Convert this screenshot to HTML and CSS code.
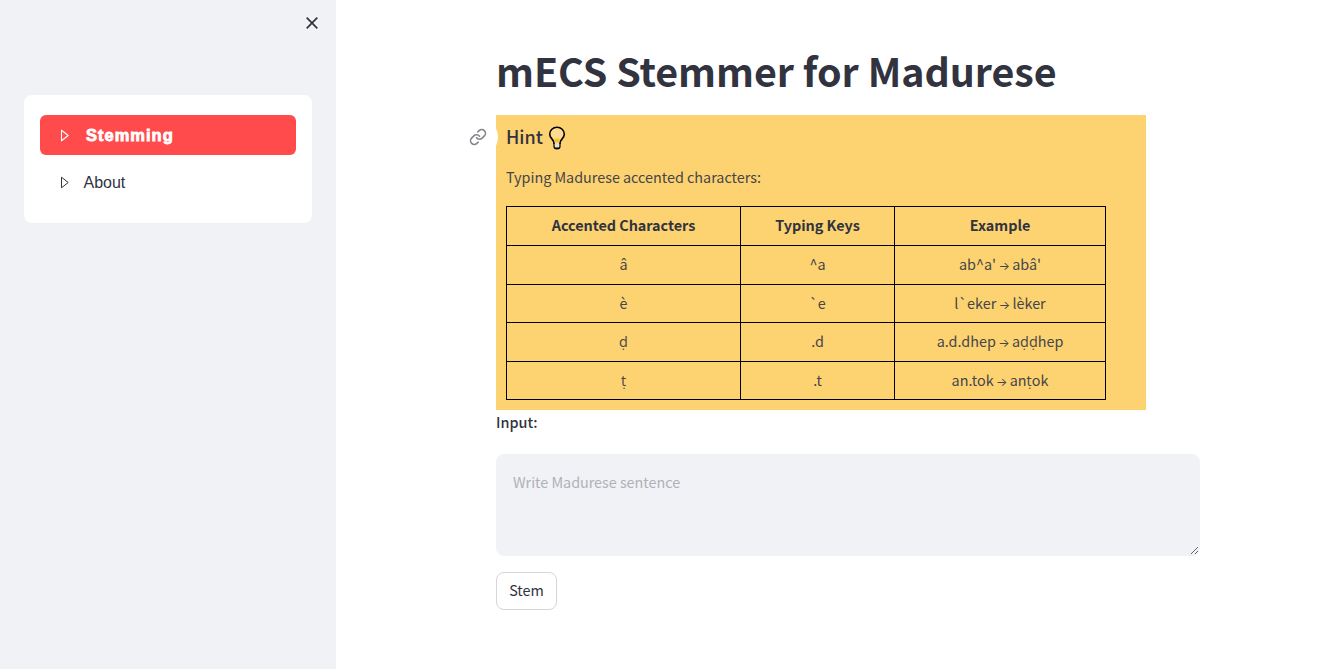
FILE: index.html
```html
<!DOCTYPE html>
<html lang="en">
<head>
<meta charset="utf-8">
<title>mECS Stemmer for Madurese</title>
<link rel="stylesheet" href="styles.css">
</head>
<body>
<div class="app">
  <aside class="sidebar">
    <button class="close" aria-label="Close sidebar">
      <svg width="14" height="14" viewBox="0 0 14 14"><path d="M1.7 1.7l10.6 10.6M12.3 1.7L1.7 12.3" fill="none" stroke="#31333f" stroke-width="1.7"/></svg>
    </button>
    <nav class="menu">
      <a class="item active"><svg class="caret" width="9" height="13" viewBox="0 0 9 13"><path d="M1.5 1.2v10.6L8.2 6.5z" fill="none" stroke="currentColor" stroke-width="1.1" stroke-linejoin="round"/></svg><span class="item-text">Stemming</span></a>
      <a class="item"><svg class="caret" width="9" height="13" viewBox="0 0 9 13"><path d="M1.5 1.2v10.6L8.2 6.5z" fill="none" stroke="currentColor" stroke-width="1" stroke-linejoin="round"/></svg><span class="item-text">About</span></a>
    </nav>
  </aside>
  <main class="main">
    <h1 class="title">mECS Stemmer for Madurese</h1>
    <section class="hint">
      <span class="anchor"><svg width="18" height="18" viewBox="0 0 24 24" fill="none" stroke="#85868c" stroke-width="2.1" stroke-linecap="round" stroke-linejoin="round"><path d="M10 13a5 5 0 0 0 7.54.54l3-3a5 5 0 0 0-7.07-7.07l-1.72 1.71"/><path d="M14 11a5 5 0 0 0-7.54-.54l-3 3a5 5 0 0 0 7.07 7.07l1.71-1.71"/></svg></span>
      <h3 class="hint-title"><span class="hint-word">Hint</span>
        <svg class="bulb" width="18" height="24" viewBox="0 0 18 24"><path d="M6 17.3C6 13.4 1.7 12.3 1.7 8.2a7.3 7 0 0 1 14.6 0c0 4.1-4.3 5.2-4.3 9.1z" fill="#fddc90" stroke="#000" stroke-width="1.6"/><path d="M6.3 12l1.5 1.2L9 12l1.2 1.2 1.5-1.2-.6 5.2H6.9z" fill="#fcc21b"/><path d="M6.6 16.6h4.8v4.4H6.6z" fill="#dcdfe8"/><path d="M6 17v3.4Q6 22.8 9 22.8t3-2.4V17" fill="none" stroke="#000" stroke-width="1.2"/><path d="M7 21.4h4l-.8 1.4H7.8z" fill="#000"/></svg>
      </h3>
      <p class="hint-copy">Typing Madurese accented characters:</p>
      <table class="keys">
        <thead><tr><th class="c1">Accented Characters</th><th class="c2">Typing Keys</th><th class="c3">Example</th></tr></thead>
        <tbody>
          <tr><td>â</td><td>^a</td><td>ab^a' <span class="arrow">→</span> abâ'</td></tr>
          <tr class="short"><td>è</td><td>`e</td><td>l`eker <span class="arrow">→</span> lèker</td></tr>
          <tr><td>ḍ</td><td>.d</td><td>a.d.dhep <span class="arrow">→</span> aḍḍhep</td></tr>
          <tr class="short"><td>ṭ</td><td>.t</td><td>an.tok <span class="arrow">→</span> anṭok</td></tr>
        </tbody>
      </table>
    </section>
    <label class="label" for="sentence">Input:</label>
    <div class="field">
      <textarea class="area" id="sentence" placeholder="Write Madurese sentence"></textarea>
    </div>
    <button class="stem">Stem</button>
  </main>
</div>
</body>
</html>
```
FILE: styles.css
```css
* { box-sizing: border-box; }
body {
  margin: 0;
  color: #31333f;
  background: #fff;
  font-family: "Noto Sans CJK SC", "Open Sans", sans-serif;
  font-size: 14.4px;
  font-weight: 400;
}
.app { display: flex; height: 669px; overflow: hidden; }
.sidebar { width: 336px; flex: none; background: #f0f2f6; padding: 16px 24px; }
.close {
  display: block;
  margin: 0 -7px 65px auto;
  width: 14px;
  height: 14px;
  padding: 0;
  border: 0;
  background: none;
}
.close svg { display: block; }
.menu { height: 128px; padding: 20px 16px; background: #fff; border-radius: 8px; }
.item {
  display: flex;
  align-items: center;
  height: 40px;
  margin-bottom: 7px;
  padding-left: 20px;
  border-radius: 6px;
  font: 400 16px "Liberation Sans", sans-serif;
}
.item .item-text { margin-left: 14.5px; padding-top: 2px; }
.active { background: #ff4b4b; color: #fff; font-weight: 700; }
.active .item-text { margin-left: 17px; padding-top: 0; font-size: 16.5px; letter-spacing: 1px; -webkit-text-stroke: 0.8px #fff; }
.main { padding: 42px 0 0 160px; width: 864px; }
.title {
  margin: 0 0 17px;
  height: 56px;
  font-size: 39.4px;
  line-height: 56px;
  font-weight: 700;
  letter-spacing: -0.04px;
  white-space: nowrap;
}
.hint {
  position: relative;
  width: 650px;
  height: 295px;
  padding: 8px 10px 10px;
  background: #fdd371;
}
.anchor {
  position: absolute;
  left: -36px;
  top: 3px;
  width: 38px;
  height: 38px;
  padding: 10px 9px;
  border-radius: 19px;
  background: #fff;
}
.anchor svg { display: block; }
.hint-title {
  display: flex;
  align-items: center;
  gap: 5px;
  height: 29px;
  margin: 0 0 12px;
  font-size: 18px;
  line-height: 29px;
  font-weight: 500;
}
.hint-word { padding-bottom: 2px; }
.hint-copy { margin: 0 0 17px; height: 25px; line-height: 25px; letter-spacing: -0.02px; color: #46454a; }
.keys { width: 600px; border-collapse: collapse; table-layout: fixed; }
.keys th, .keys td {
  height: 39px;
  padding: 0 0 2px;
  border: 1px solid #000;
  text-align: center;
  line-height: 24px;
}
.keys td { color: #46454a; }
.keys th { font-weight: 700; letter-spacing: -0.03px; }
.keys .short td { height: 38px; padding-bottom: 2px; }
.c1 { width: 234px; }
.c2 { width: 154px; }
.arrow { margin: 0 -0.9px; font-family: "Inter", sans-serif; font-size: 12px; line-height: 1; }
.label { display: block; height: 44px; line-height: 24px; font-weight: 500; }
.field { height: 102px; }
.area {
  display: block;
  width: 704px;
  height: 102px;
  padding: 14px 16px;
  border: 1px solid #f0f2f6;
  border-radius: 8px;
  background: #f0f2f6;
  color: #31333f;
  font: inherit;
  line-height: 25px;
  letter-spacing: -0.03px;
}
.area::placeholder { color: #b0b1b7; }
.stem {
  display: block;
  width: 61px;
  height: 38px;
  margin-top: 16px;
  padding: 0 0 3px;
  border: 1px solid #d6d6d9;
  border-radius: 8px;
  background: #fff;
  color: #31333f;
  font: inherit;
}
```
